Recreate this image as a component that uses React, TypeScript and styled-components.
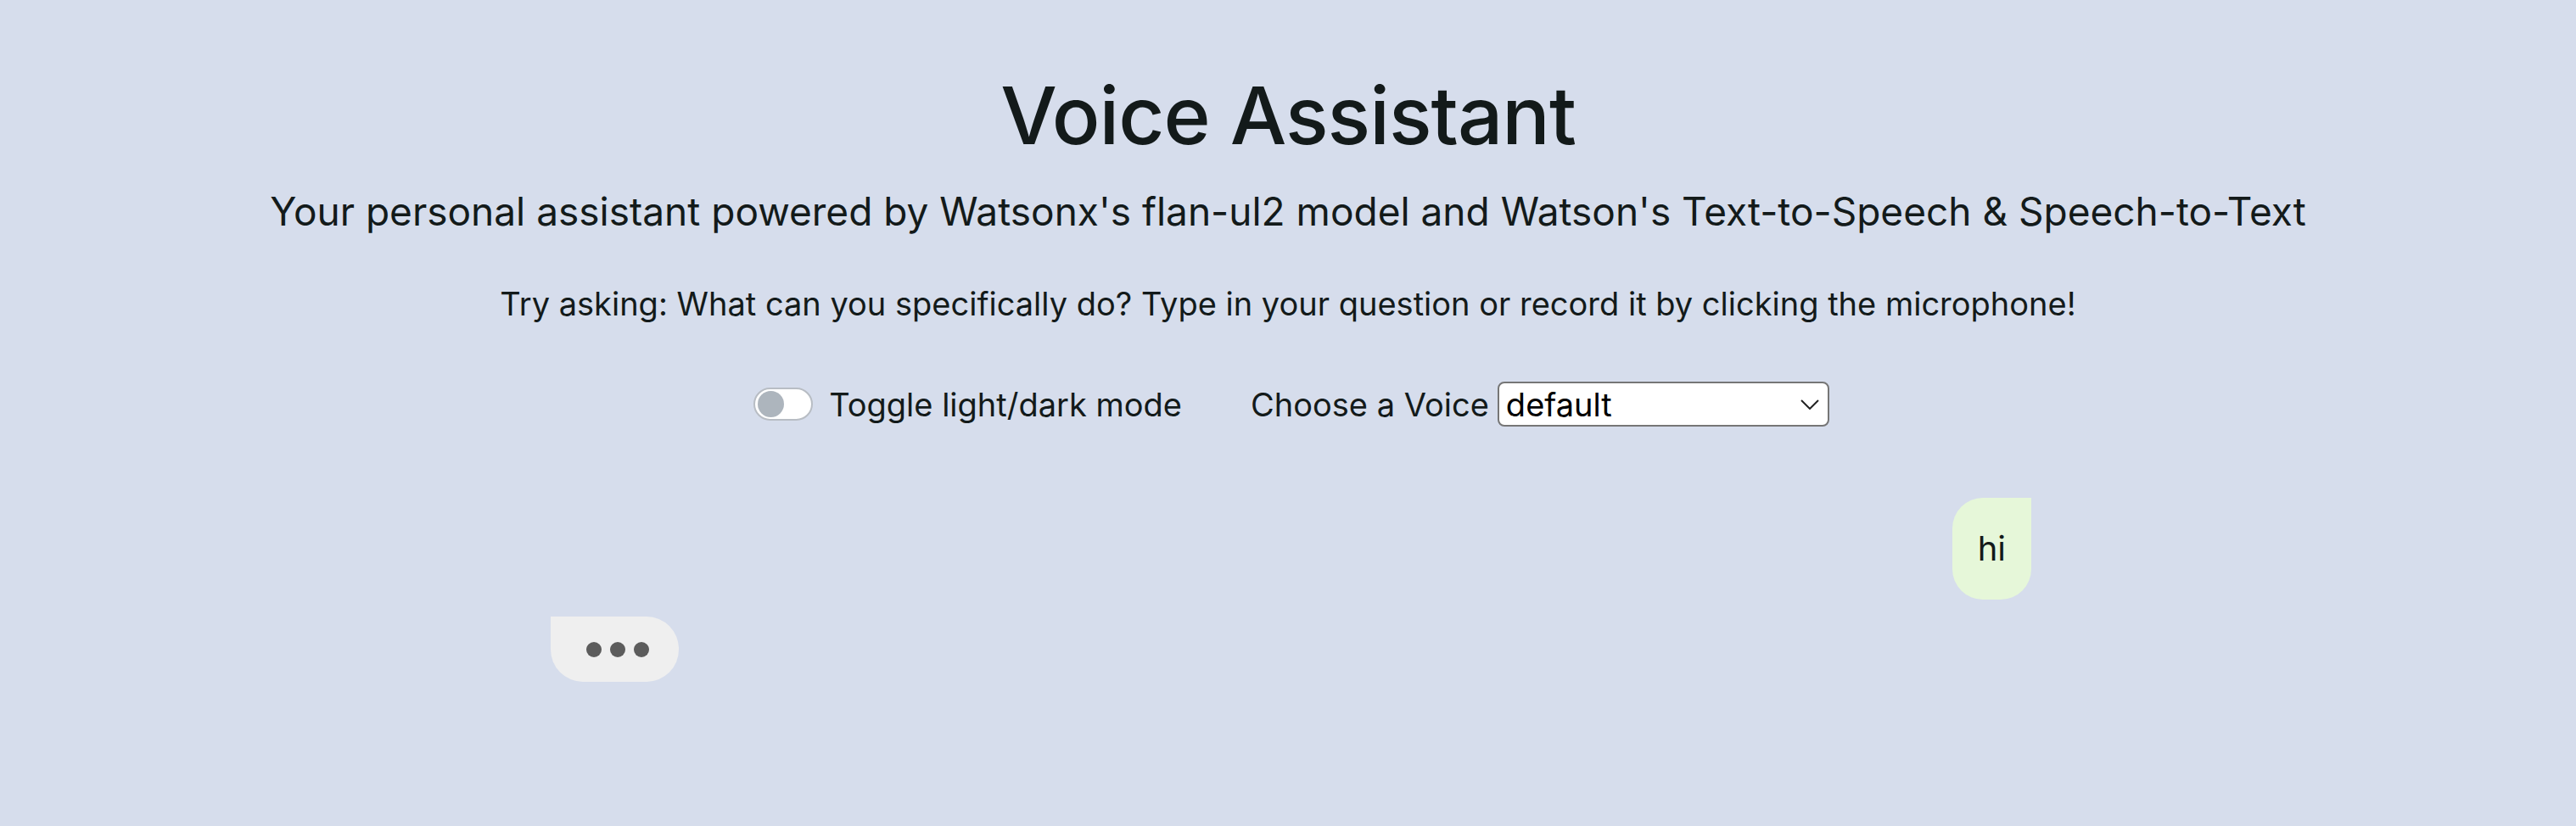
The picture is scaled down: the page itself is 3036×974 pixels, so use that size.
import React from "react";
import styled, { createGlobalStyle } from "styled-components";

const Global = createGlobalStyle`
  html, body { margin: 0; padding: 0; background: #d6ddec; }
  body { font-family: Inter, "Liberation Sans", Arial, sans-serif; color: #131a1a; }
`;

const Page = styled.main`
  min-height: 974px;
  display: flex;
  flex-direction: column;
  align-items: center;
  padding-top: 89px;
  box-sizing: border-box;
`;

const Title = styled.h1`
  margin: 0;
  font-size: 94px;
  font-weight: 500;
  letter-spacing: -1px;
  line-height: 1;
`;

const Subtitle = styled.h2`
  margin: 43px 0 0;
  font-size: 46px;
  font-weight: 400;
  line-height: 1;
`;

const Hint = styled.p`
  margin: 67px 0 0;
  font-size: 38px;
  line-height: 1;
`;

const Controls = styled.div`
  margin: 73px 0 0 8px;
  display: flex;
  align-items: center;
  font-size: 38px;
`;

const SwitchLabel = styled.label`
  display: flex;
  align-items: center;
  gap: 19px;
`;

const Switch = styled.span`
  width: 70px;
  height: 39px;
  box-sizing: border-box;
  border: 2px solid #b8bdc4;
  border-radius: 20px;
  background: #fff;
  display: flex;
  align-items: center;
  padding-left: 3px;
`;

const Knob = styled.span`
  width: 31px;
  height: 31px;
  border-radius: 50%;
  background: #adb5bd;
`;

const VoiceLabel = styled.label`
  margin-left: 81px;
  display: flex;
  align-items: center;
  gap: 10px;
`;

const SelectBox = styled.div`
  width: 391px;
  height: 53px;
  box-sizing: border-box;
  border: 2px solid #767676;
  border-radius: 8px;
  background: #fff;
  display: flex;
  align-items: center;
  justify-content: space-between;
  padding: 0 10px 0 8px;
  color: #000;
  font-size: 38px;
`;

const Chat = styled.section`
  margin-top: 84px;
  width: 1750px;
  display: flex;
  flex-direction: column;
  gap: 20px;
`;

const UserBubble = styled.div`
  align-self: flex-end;
  margin-right: -1px;
  background: #e6f7d9;
  border-radius: 36px 0 36px 36px;
  padding: 30px 30px;
  font-size: 40px;
  line-height: 60px;
`;

const BotBubble = styled.div`
  align-self: flex-start;
  margin-left: 6px;
  height: 77px;
  box-sizing: border-box;
  background: #efefef;
  border-radius: 0 38px 38px 38px;
  padding: 0 35px 0 42px;
  display: flex;
  align-items: center;
  gap: 10px;
`;

const Dot = styled.span`
  width: 18px;
  height: 18px;
  border-radius: 50%;
  background: #5c5c5c;
`;

export default function App() {
  return (
    <>
      <Global />
      <Page>
        <Title>Voice Assistant</Title>
        <Subtitle>
          Your personal assistant powered by Watsonx's flan-ul2 model and Watson's Text-to-Speech &amp; Speech-to-Text
        </Subtitle>
        <Hint>
          Try asking: What can you specifically do? Type in your question or record it by clicking the microphone!
        </Hint>
        <Controls>
          <SwitchLabel>
            <Switch>
              <Knob />
            </Switch>
            Toggle light/dark mode
          </SwitchLabel>
          <VoiceLabel>
            Choose a Voice
            <SelectBox>
              <span>default</span>
              <svg width="22" height="12" viewBox="0 0 22 12" fill="none">
                <path d="M1 1l10 10L21 1" stroke="#222" strokeWidth="2" />
              </svg>
            </SelectBox>
          </VoiceLabel>
        </Controls>
        <Chat>
          <UserBubble>hi</UserBubble>
          <BotBubble>
            <Dot />
            <Dot />
            <Dot />
          </BotBubble>
        </Chat>
      </Page>
    </>
  );
}
